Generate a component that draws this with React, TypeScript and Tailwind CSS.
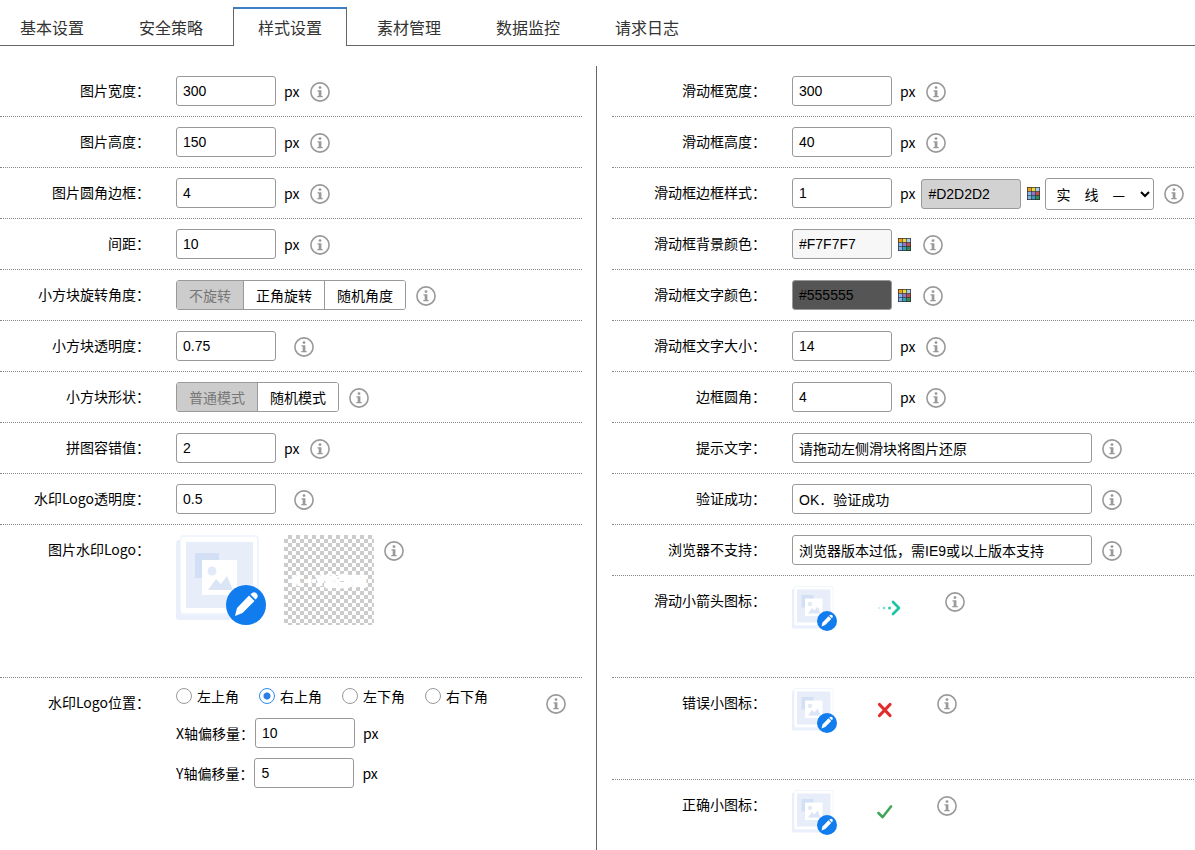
import type { ReactNode } from "react";

const TABS = ["基本设置", "安全策略", "样式设置", "素材管理", "数据监控", "请求日志"];
const ACTIVE_TAB = "样式设置";

const POSITIONS = ["左上角", "右上角", "左下角", "右下角"];

const PALETTE = [
  "#f0a020", "#ead93a", "#a9cdea",
  "#86b4ee", "#8a78c8", "#c0504d",
  "#7db4e6", "#3a98b8", "#2e8b57",
];

function InfoIcon({ className = "" }: { className?: string }) {
  return (
    <button type="button" aria-label="说明" className={`shrink-0 ${className}`}>
      <svg className="block h-5 w-5" viewBox="0 0 20 20" fill="none">
        <circle cx="10" cy="10" r="9.1" stroke="#999" strokeWidth="1.6" />
        <circle cx="10" cy="5.6" r="1.4" fill="#999" />
        <path d="M7.500 8.200h3.900v5.900h1.300v1.200H7.300v-1.200h1.400V9.400H7.500z" fill="#999" />
      </svg>
    </button>
  );
}

function PaletteButton() {
  return (
    <button type="button" aria-label="选择颜色" className="ml-1.5 shrink-0">
      <svg className="block" width="13" height="13" viewBox="0 0 13 13">
        <rect width="13" height="13" fill="#2b2b2b" />
        {PALETTE.map((color, i) => (
          <rect
            key={color}
            x={0.7 + (i % 3) * 4.05}
            y={0.7 + Math.floor(i / 3) * 4.05}
            width="3.500"
            height="3.500"
            fill={color}
          />
        ))}
      </svg>
    </button>
  );
}

function UploadButton({ className }: { className: string }) {
  return (
    <button type="button" aria-label="上传图片" className="shrink-0">
      <svg className={`block ${className}`} viewBox="0 0 90 90">
        <rect x="0" y="5" width="78" height="80" rx="3" fill="#e9effb" />
        <rect x="4" y="0" width="79" height="80" rx="4" fill="#f1f5fc" />
        <rect x="5" y="2" width="76" height="76" rx="3" fill="#fff" />
        <rect x="10" y="7" width="67" height="66" fill="#e7eef9" />
        <rect x="19" y="18" width="24" height="25" fill="#d3dff4" />
        <rect x="26" y="25" width="35" height="35" fill="#fff" />
        <circle cx="36" cy="36" r="4.5" fill="#e2eaf8" />
        <path d="M32 55l8-11 5 5 6-8 6 14z" fill="#dbe5f6" />
        <circle cx="70" cy="70" r="20" fill="#117cee" />
        <path d="M59 81l2-8 12-12.500 5.500 5.500L66.500 78z" fill="#fff" />
        <path d="M74.500 59.500l1.500-1.500a3.600 3.600 0 0 1 5 5l-1.500 1.500z" fill="#fff" />
      </svg>
    </button>
  );
}

function Row({ label, htmlFor, children, className = "h-[51px] border-b" }: {
  label: string;
  htmlFor?: string;
  children: ReactNode;
  className?: string;
}) {
  return (
    <div className={`flex items-start gap-[26px] border-dotted border-[#888] ${className}`}>
      <label
        htmlFor={htmlFor}
        className="flex h-12 w-[150px] shrink-0 items-center justify-end whitespace-nowrap"
      >
        {label}
      </label>
      {children}
    </div>
  );
}

function TextInput({ id, value, label, className = "w-[100px]" }: {
  id: string;
  value: string;
  label?: string;
  className?: string;
}) {
  return (
    <input
      id={id}
      type="text"
      aria-label={label}
      defaultValue={value}
      className={`h-[30px] shrink-0 rounded-[3px] border border-[#999] px-1.5 font-['Liberation_Sans','Noto_Sans_CJK_SC',sans-serif] text-sm ${className}`}
    />
  );
}

function NumberRow({ id, label, value, unit = true }: {
  id: string;
  label: string;
  value: string;
  unit?: boolean;
}) {
  return (
    <Row label={label} htmlFor={id}>
      <div className="flex h-[50px] items-center">
        <TextInput id={id} value={value} />
        {unit && <span className="ml-2">px</span>}
        <InfoIcon className={unit ? "ml-[11px] mt-0.5" : "ml-[18px] mt-0.5"} />
      </div>
    </Row>
  );
}

function ColorRow({ id, label, value, color }: { id: string; label: string; value: string; color: string }) {
  return (
    <Row label={label} htmlFor={id}>
      <div className="flex h-[50px] items-center">
        <TextInput id={id} value={value} className={`w-[100px] ${color}`} />
        <PaletteButton />
        <InfoIcon className="ml-3 mt-0.5" />
      </div>
    </Row>
  );
}

function MessageRow({ id, label, value }: { id: string; label: string; value: string }) {
  return (
    <Row label={label} htmlFor={id}>
      <div className="flex h-[50px] items-center">
        <TextInput id={id} value={value} className="w-[300px]" />
        <InfoIcon className="ml-2.5 mt-0.5" />
      </div>
    </Row>
  );
}

/* Segmented buttons, the first one is the current choice */
function ChoiceRow({ label, options }: { label: string; options: string[] }) {
  return (
    <Row label={label}>
      <div className="flex h-[50px] items-center">
        <div className="flex h-[30px] overflow-hidden rounded-[3px] border border-[#999]">
          {options.map((option, i) => (
            <button
              key={option}
              type="button"
              aria-pressed={i === 0}
              className={`whitespace-nowrap px-3 ${
                i === 0 ? "bg-[#ccc] text-[#777]" : "border-l border-[#999] bg-white"
              }`}
            >
              {option}
            </button>
          ))}
        </div>
        <InfoIcon className="ml-2.5 mt-0.5" />
      </div>
    </Row>
  );
}

function IconRow({ label, children, className, infoClass }: {
  label: string;
  children: ReactNode;
  className?: string;
  infoClass: string;
}) {
  return (
    <Row label={label} className={className}>
      <div className="flex items-start pt-2.5">
        <UploadButton className="h-[45px] w-[45px]" />
        <div className="ml-10 flex h-11 items-center">{children}</div>
        <InfoIcon className={`mt-1.5 ${infoClass}`} />
      </div>
    </Row>
  );
}

export default function App() {
  return (
    <div className="flex min-h-screen flex-col bg-white font-['Noto_Sans_CJK_SC',sans-serif] text-sm text-black">
      {/* Tabs */}
      <nav className="flex h-[46px] items-end border-b border-[#666] pt-[7px]">
        <div className="-mb-px -ml-[5px] flex gap-[5px]">
          {TABS.map((tab) => (
            <a
              key={tab}
              href="#"
              className={`flex h-[39px] items-center whitespace-nowrap border-x border-t-2 px-6 pb-0.5 text-base text-[#333] ${
                tab === ACTIVE_TAB
                  ? "border-x-[#666] border-t-[#3d7fc4] bg-white"
                  : "border-transparent"
              }`}
            >
              {tab}
            </a>
          ))}
        </div>
      </nav>

      <main className="mt-5 grid grow grid-cols-[597fr_598fr]">
        {/* Image settings */}
        <section className="border-r border-[#666] pr-3.5">
          <NumberRow id="img-width" label="图片宽度：" value="300" />
          <NumberRow id="img-height" label="图片高度：" value="150" />
          <NumberRow id="img-radius" label="图片圆角边框：" value="4" />
          <NumberRow id="gap" label="间距：" value="10" />
          <ChoiceRow label="小方块旋转角度：" options={["不旋转", "正角旋转", "随机角度"]} />
          <NumberRow id="block-opacity" label="小方块透明度：" value="0.75" unit={false} />
          <ChoiceRow label="小方块形状：" options={["普通模式", "随机模式"]} />
          <NumberRow id="tolerance" label="拼图容错值：" value="2" />
          <NumberRow id="logo-opacity" label="水印Logo透明度：" value="0.5" unit={false} />

          <Row label="图片水印Logo：" className="h-[153px] border-b">
            <div className="flex items-start pt-2.5">
              <UploadButton className="h-[90px] w-[90px]" />
              <div className="ml-[18px] flex h-[90px] w-[90px] items-center justify-center bg-[repeating-conic-gradient(#ccc_0_25%,#fff_0_50%)] bg-size-[8px_8px]">
                <span className="whitespace-nowrap text-sm font-black text-white [text-shadow:0_0_1px_#fff,1px_0_#fff,-1px_0_#fff]">
                  K·Y信部网
                </span>
              </div>
              <InfoIcon className="ml-2.5 mt-1.5" />
            </div>
          </Row>

          <Row label="水印Logo位置：" className="">
            <div className="flex flex-col gap-2.5">
              <div className="flex h-[30px] items-end gap-5 pb-0.5">
                {POSITIONS.map((position) => (
                  <label key={position} className="flex items-center gap-[5px] whitespace-nowrap leading-5">
                    <input
                      type="radio"
                      name="logo-position"
                      defaultChecked={position === "右上角"}
                      className="h-4 w-4 appearance-none rounded-full border border-[#999] checked:border-[#2d8cf0] checked:bg-[radial-gradient(circle,#2d7fe6_0_3px,#fff_4px)]"
                    />
                    {position}
                  </label>
                ))}
              </div>
              {["X", "Y"].map((axis) => (
                <div key={axis} className="flex items-center">
                  <label htmlFor={`offset-${axis}`} className="mr-px">{axis}轴偏移量：</label>
                  <TextInput id={`offset-${axis}`} value={axis === "X" ? "10" : "5"} />
                  <span className="ml-2">px</span>
                </div>
              ))}
            </div>
            <InfoIcon className="ml-8 mt-4" />
          </Row>
        </section>

        {/* Slider settings */}
        <section className="pl-[15px] pr-px [&>div]:pl-1">
          <NumberRow id="bar-width" label="滑动框宽度：" value="300" />
          <NumberRow id="bar-height" label="滑动框高度：" value="40" />
          <Row label="滑动框边框样式：" htmlFor="bar-border">
            <div className="flex h-[50px] items-center">
              <TextInput id="bar-border" value="1" />
              <span className="ml-2">px</span>
              <TextInput
                id="bar-border-color"
                label="边框颜色"
                value="#D2D2D2"
                className="ml-1.5 mt-0.5 w-[100px] bg-[#d2d2d2]"
              />
              <PaletteButton />
              <select
                aria-label="边框线型"
                className="ml-[5px] mt-0.5 h-8 w-[109px] rounded-[3px] border border-[#999] bg-white pl-1.5 text-sm"
              >
                <option>实　线　—</option>
                <option>虚　线　--</option>
              </select>
              <InfoIcon className="ml-2.5 mt-0.5" />
            </div>
          </Row>
          <ColorRow id="bar-bg" label="滑动框背景颜色：" value="#F7F7F7" color="bg-[#f7f7f7]" />
          <ColorRow id="bar-color" label="滑动框文字颜色：" value="#555555" color="bg-[#555555]" />
          <NumberRow id="bar-font" label="滑动框文字大小：" value="14" />
          <NumberRow id="bar-radius" label="边框圆角：" value="4" />
          <MessageRow id="msg-tip" label="提示文字：" value="请拖动左侧滑块将图片还原" />
          <MessageRow id="msg-ok" label="验证成功：" value="OK．验证成功" />
          <MessageRow id="msg-browser" label="浏览器不支持：" value="浏览器版本过低，需IE9或以上版本支持" />

          <IconRow label="滑动小箭头图标：" className="h-[102px] border-b" infoClass="ml-11">
            <svg width="24" height="16" viewBox="0 0 24 16" fill="none">
              <circle cx="2" cy="8" r="1" fill="#b9ebe2" />
              <circle cx="7" cy="8" r="1.3" fill="#6fdcc8" />
              <circle cx="12.500" cy="8" r="1.500" fill="#2fcbb0" />
              <path d="M16 2l6 6-6 6" stroke="#1cc3a5" strokeWidth="2.6" strokeLinecap="round" strokeLinejoin="round" />
            </svg>
          </IconRow>
          <IconRow label="错误小图标：" className="h-[102px] border-b" infoClass="ml-11">
            <svg width="16" height="16" viewBox="0 0 16 16">
              <path d="M2.500 2.500l10.500 11M13 2.500l-10.500 11" stroke="#e32b2b" strokeWidth="3.200" strokeLinecap="round" />
            </svg>
          </IconRow>
          <IconRow label="正确小图标：" className="" infoClass="ml-11">
            <svg width="16" height="16" viewBox="0 0 16 16" fill="none">
              <path d="M1.500 9l4 4.200L14 2.500" stroke="#3fa65a" strokeWidth="2.600" strokeLinecap="round" strokeLinejoin="round" />
            </svg>
          </IconRow>
        </section>
      </main>
    </div>
  );
}
